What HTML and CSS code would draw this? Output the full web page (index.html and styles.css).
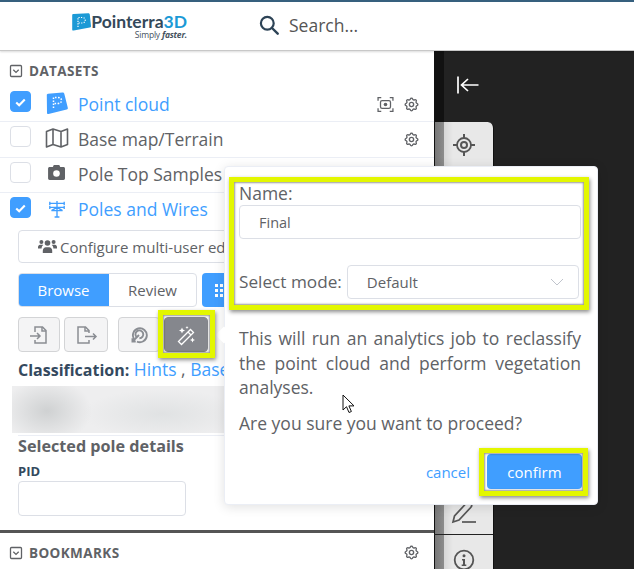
FILE: index.html
```html
<!DOCTYPE html>
<html lang="en">
<head>
<meta charset="utf-8">
<title>Pointerra3D</title>
<link rel="stylesheet" href="styles.css">
</head>
<body>
<svg class="defs" width="0" height="0" aria-hidden="true">
  <symbol id="gear" viewBox="0 0 24 24"><path fill="none" stroke="currentColor" stroke-width="1.9" d="M10.325 4.317c.426-1.756 2.924-1.756 3.35 0a1.724 1.724 0 002.573 1.066c1.543-.94 3.31.826 2.37 2.37a1.724 1.724 0 001.065 2.572c1.756.426 1.756 2.924 0 3.35a1.724 1.724 0 00-1.066 2.573c.94 1.543-.826 3.31-2.37 2.37a1.724 1.724 0 00-2.572 1.065c-.426 1.756-2.924 1.756-3.35 0a1.724 1.724 0 00-2.573-1.066c-1.543.94-3.31-.826-2.37-2.37a1.724 1.724 0 00-1.065-2.572c-1.756-.426-1.756-2.924 0-3.35a1.724 1.724 0 001.066-2.573c-.94-1.543.826-3.31 2.37-2.37.996.608 2.296.07 2.572-1.065z"/><circle cx="12" cy="12" r="3" fill="none" stroke="currentColor" stroke-width="1.9"/></symbol>
  <symbol id="collapse" viewBox="0 0 14 14"><rect x="1.500" y="1.500" width="11" height="11" rx="1" fill="none" stroke="currentColor" stroke-width="1.300"/><path d="M4.300 5.700 7 8.400l2.700-2.700" fill="none" stroke="currentColor" stroke-width="1.300"/></symbol>
  <symbol id="check" viewBox="0 0 20 20"><path d="M5.500 10.500 8.600 13.400 14.500 7.300" fill="none" stroke="#fff" stroke-width="2.200"/></symbol>
</svg>

<header class="topbar">
  <div class="logo">
    <svg class="logo-mark" width="19" height="18" viewBox="0 0 19 18"><path d="M1.500 1 16 .2c1 0 1.600.5 1.800 1.300L19 13c.1.9-.4 1.500-1.200 1.600L1.700 17.600c-.9.1-1.500-.4-1.500-1.200L.2 2.300C.2 1.500.7 1 1.500 1z" fill="#1c9ad6"/><path d="M6 14V4.500h4.200c2 0 3 1.200 3 2.700S12.200 10 10.200 10H6.200" fill="none" stroke="#fff" stroke-width="1.200" stroke-dasharray="1.200 1.300"/></svg>
    <div class="logo-text">
      <div class="logo-name">Pointerra<span class="logo-3d">3D</span></div>
      <div class="logo-tag">Simply <b><i>faster.</i></b></div>
    </div>
  </div>
  <div class="search">
    <svg width="20" height="20" viewBox="0 0 20 20"><circle cx="8.300" cy="8.300" r="6.400" fill="none" stroke="#2d4356" stroke-width="2.200"/><path d="m13 13 5.700 5.700" stroke="#2d4356" stroke-width="2.400" stroke-linecap="round"/></svg>
    <span>Search...</span>
  </div>
</header>

<main class="workspace">
  <section class="panel">
    <div class="panel-scroll">
      <h2 class="section-title datasets"><svg class="ico14"><use href="#collapse"/></svg>DATASETS</h2>

      <div class="row row-first">
        <span class="cb on"><svg width="20" height="20"><use href="#check"/></svg></span>
        <svg class="row-ico" width="24" height="24" viewBox="0 0 24 24"><path d="M3 2.800 17.500 1.500c1 0 1.500.4 1.800 1.200l3.500 14c.2 1-.2 1.600-1.100 1.800L3.500 23c-1 .2-1.500-.3-1.500-1.200L1.800 4c0-.7.500-1.100 1.200-1.200z" fill="#409eff"/><path d="M8.500 17V6.500h4.500c2.300 0 3.500 1.300 3.500 3s-1.300 3-3.500 3H8.800" fill="none" stroke="#fff" stroke-width="1.500" stroke-dasharray="1.500 1.500"/></svg>
        <span class="row-label blue">Point cloud</span>
        <span class="row-actions">
          <svg class="ico16" viewBox="0 0 16 16"><path d="M1 4.500V1.500h3M12 1.500h3v3M15 11.500v3h-3M4 14.500H1v-3" fill="none" stroke="currentColor" stroke-width="1.200"/><rect x="3.300" y="4.300" width="9.400" height="7.400" rx="1.500" fill="none" stroke="currentColor" stroke-width="1.200"/><circle cx="8" cy="8" r="1.700" fill="currentColor"/></svg>
          <svg class="ico16"><use href="#gear"/></svg>
        </span>
      </div>

      <div class="row row-second">
        <span class="cb"></span>
        <svg class="row-ico" width="24" height="24" viewBox="0 0 24 24"><path d="M1.500 5.500 8 3l8 2.500L22.500 3v15.500L16 21l-8-2.500L1.500 21zM8 3v15.500M16 5.500V21" fill="none" stroke="#606266" stroke-width="1.600" stroke-linejoin="round"/></svg>
        <span class="row-label">Base map/Terrain</span>
        <span class="row-actions"><svg class="ico16"><use href="#gear"/></svg></span>
      </div>

      <div class="row">
        <span class="cb"></span>
        <svg class="row-ico" width="24" height="24" viewBox="0 0 24 24"><path d="M4.500 6H8l1-2.200h6L16 6h3.500c1 0 1.700.7 1.700 1.700v10.600c0 1-.7 1.700-1.700 1.700h-15c-1 0-1.700-.7-1.700-1.700V7.700C2.800 6.700 3.500 6 4.500 6z" transform="translate(.5 -.5) scale(.92)" fill="#606266"/><circle cx="11.500" cy="11.500" r="3.300" fill="#fff"/></svg>
        <span class="row-label">Pole Top Samples</span>
      </div>

      <div class="row row-last">
        <span class="cb on"><svg width="20" height="20"><use href="#check"/></svg></span>
        <svg class="row-ico" width="24" height="24" viewBox="-3 -3 30 30"><path d="M12 2v20M3 5h18M3 10h18M5 14h14M3 3v4M21 3v4M3 8v4M21 8v4M12 10 5 14M12 10l7 4M9 22h6" fill="none" stroke="#409eff" stroke-width="1.700"/></svg>
        <span class="row-label blue">Poles and Wires</span>
      </div>

      <div class="config-btn">
        <svg width="19" height="15" viewBox="0 0 19 15"><g fill="#606266"><circle cx="9.500" cy="4" r="2.800"/><path d="M4.800 14v-2.300c0-2 1.500-3.400 3-3.400h3.400c1.500 0 3 1.400 3 3.400V14z"/><circle cx="3.400" cy="3" r="2"/><circle cx="15.600" cy="3" r="2"/><path d="M0 9.500V8c0-1.300 1-2.300 2-2.300h2.300c.4 0 .8.100 1 .3-.9.700-1.600 1.700-1.700 3.500zM19 9.500V8c0-1.300-1-2.300-2-2.300h-2.300c-.4 0-.8.100-1 .3.900.7 1.600 1.700 1.700 3.500z"/></g></svg>
        <span>Configure multi-user editing</span>
      </div>

      <div class="mode-row">
        <div class="seg">
          <span class="seg-item active">Browse</span>
          <span class="seg-item">Review</span>
        </div>
        <span class="grid-btn">
          <svg width="14" height="14" viewBox="0 0 14 14" fill="#fff"><rect x="1" y="1" width="3" height="3"/><rect x="6" y="1" width="3" height="3"/><rect x="1" y="6" width="3" height="3"/><rect x="6" y="6" width="3" height="3"/><rect x="1" y="11" width="3" height="3"/><rect x="6" y="11" width="3" height="3"/></svg>
        </span>
      </div>

      <div class="tool-row">
        <span class="tool w42"><svg width="22" height="22" viewBox="0 0 22 22" fill="none" stroke="#8a8d93" stroke-width="1.500"><path d="M7 8V3h7.500L18 6.500V19H7v-3"/><path d="M14 3v4h4"/><path d="M2 12h10M9 9l3 3-3 3"/></svg></span>
        <span class="tool w44"><svg width="24" height="22" viewBox="0 0 24 22" fill="none" stroke="#8a8d93" stroke-width="1.500"><path d="M15 9V6.500L11.500 3H4v16h11v-3"/><path d="M11 3v4h4"/><path d="M11 12.500h11M19 9.500l3 3-3 3"/></svg></span>
        <span class="tool w42 tool-gap"><svg width="18" height="18" viewBox="0 0 22 22" fill="none" stroke="#8a8d93" stroke-width="2.300"><path d="M5 16a8.500 8.500 0 1 1 3.500 3"/><path d="M8.500 14a4.800 4.800 0 1 1 3 1"/><path d="M11 11 3 19M3 15v4h4"/></svg></span>
        <span class="tool wand"><svg width="22" height="22" viewBox="0 0 22 22"><path d="M3.500 17.500 15.500 5.500l3 3-12 12zM13 8l3 3" fill="none" stroke="#fff" stroke-width="1.300"/><path d="M7 3.500l.9 2.100 2.100.9-2.100.9L7 9.500l-.9-2.100-2.100-.9 2.100-.9zM17.500 13.500l.8 1.700 1.700.8-1.700.8-.8 1.700-.8-1.700-1.700-.8 1.700-.8zM12 2l.5 1 1 .5-1 .5-.5 1-.5-1-1-.5 1-.5z" fill="#fff"/></svg></span>
      </div>

      <div class="classification"><b>Classification:</b> <a>Hints</a> , <a>Base</a></div>
      <div class="blurred"></div>
      <div class="rule"></div>
      <h3 class="details-title">Selected pole details</h3>
      <label class="pid">PID</label>
      <div class="pid-input"></div>
    </div>

    <div class="bookmarks">
      <h2 class="section-title"><svg class="ico14"><use href="#collapse"/></svg>BOOKMARKS</h2>
      <svg class="ico16"><use href="#gear"/></svg>
    </div>
  </section>

  <aside class="side">
    <div class="side-top">
      <svg width="24" height="20" viewBox="0 0 24 20" fill="none" stroke="#fff" stroke-width="1.700"><path d="M2 1.500v17"/><path d="M22.500 10H6.500M12 4l-6.500 6 6.500 6"/></svg>
    </div>
    <div class="rail">
      <div class="rail-cell target">
        <svg width="22" height="22" viewBox="0 0 22 22" fill="none" stroke="#555"><circle cx="11" cy="11" r="7" stroke-width="1.800"/><circle cx="11" cy="11" r="3" stroke-width="2"/><path d="M11 0v4M11 18v4M0 11h4M18 11h4" stroke-width="2"/></svg>
      </div>
      <div class="rail-spacer"></div>
      <div class="rail-cell pen">
        <svg width="26" height="24" viewBox="0 0 26 24" fill="none" stroke="#555" stroke-width="1.700"><path d="M2 22l1.500-6L15 3.500c1.500-1.500 3.500-1.500 4.700-.3s1.200 3 0 4.300L8 20z"/><path d="M11 22h14"/></svg>
      </div>
      <div class="rail-cell info">
        <svg width="22" height="22" viewBox="0 0 22 22"><circle cx="11" cy="11" r="9.300" fill="none" stroke="#555" stroke-width="1.800"/><circle cx="11" cy="6.800" r="1.500" fill="#555"/><path d="M9 10h3v5.500h1.300V17H8.700v-1.500H10V11.500H9z" fill="#555"/></svg>
      </div>
    </div>
  </aside>
</main>

<div class="popover">
  <span class="pop-arrow"></span>
  <div class="field-label">Name:</div>
  <div class="text-input">Final</div>
  <div class="mode-field">
    <span class="field-label mode-label">Select mode:</span>
    <div class="select"><span>Default</span>
      <svg width="14" height="8" viewBox="0 0 14 8" fill="none" stroke="#c0c4cc" stroke-width="1"><path d="M1 1l6 6 6-6"/></svg>
    </div>
  </div>
  <p class="pop-text">This will run an analytics job to reclassify the point cloud and perform vegetation analyses.</p>
  <p class="pop-text pop-q">Are you sure you want to proceed?</p>
  <div class="pop-actions">
    <a class="cancel">cancel</a>
    <span class="confirm">confirm</span>
  </div>
</div>

<div class="hl hl-form"></div>
<div class="hl hl-confirm"></div>
<div class="hl hl-wand"></div>

<svg class="cursor" width="13" height="20" viewBox="0 0 13 20"><path d="M1 1v15l3.500-3.300 2.500 5.800 2.400-1-2.500-5.600H12z" fill="#fff" stroke="#111" stroke-width="1"/></svg>
</body>
</html>
```

FILE: styles.css
```css
* { box-sizing: border-box; }
html, body { margin: 0; height: 100%; }
body {
  position: relative;
  width: 634px;
  height: 569px;
  overflow: hidden;
  display: flex;
  flex-direction: column;
  font-family: "Open Sans", sans-serif;
  color: #606266;
  background: #222;
}
.defs { position: absolute; }

/* top bar */
.topbar {
  height: 51px;
  flex: none;
  display: flex;
  align-items: center;
  padding: 0 0 0 72px;
  background: #fff;
  border-top: 2px solid #36607e;
  border-bottom: 1px solid #c8c8c8;
  box-shadow: 0 1px 2px rgba(0,0,0,.15);
  z-index: 2;
}
.logo { display: flex; align-items: flex-start; gap: 2px; width: 187px; height: 27px; }
.logo-mark { flex: none; }
.logo-text { display: flex; flex-direction: column; align-items: flex-end; width: 94px; }
.logo-name { font-family: Lato, sans-serif; font-weight: 700; font-size: 17.500px; line-height: 17px; color: #34495a; white-space: nowrap; }
.logo-3d { color: #1c9ad6; }
.logo-tag { font-size: 8.500px; line-height: 10px; color: #45525e; letter-spacing: -.2px; }
.search { display: flex; align-items: center; gap: 10px; font-size: 17.500px; color: #555; margin-top: -2px; }

/* layout */
.workspace { flex: 1; display: flex; min-height: 0; }
.panel { width: 434px; flex: none; background: #fff; display: flex; flex-direction: column; }
.panel-scroll { height: 479px; flex: none; overflow: hidden; }
.section-title {
  margin: 0;
  display: flex;
  align-items: center;
  gap: 6px;
  padding-left: 9px;
  font-size: 13.500px;
  font-weight: 700;
  letter-spacing: .4px;
  color: #606266;
}
.datasets { height: 37px; padding-top: 3px; }
.ico14 { width: 14px; height: 14px; color: #606266; flex: none; }
.ico16 { width: 17px; height: 17px; color: #606266; flex: none; }

/* rows */
.row {
  height: 35px;
  display: flex;
  align-items: center;
  padding-left: 10px;
  border-bottom: 1px solid #ebeef5;
}
.row-first { height: 34px; }
.row-second { height: 36px; }
.row-last { border-bottom: 0; }
.cb {
  width: 21px; height: 21px; flex: none;
  border: 1px solid #dcdfe6;
  border-radius: 4px;
  background: #fff;
  margin: 0 14px 6px 0;
}
.cb.on { background: #409eff; border-color: #409eff; display: flex; align-items: center; justify-content: center; }
.row-ico { flex: none; margin: 0 9px 3px 0; }
.row-label { font-size: 17.500px; white-space: nowrap; margin-bottom: 2px; }
.row-last .row-label { margin-bottom: 4px; }
.blue { color: #409eff; }
.row-actions { margin-left: auto; margin-right: 14px; display: flex; gap: 9px; align-items: center; }

/* buttons */
.config-btn {
  margin: 2px 0 0 18px;
  width: 420px;
  height: 33px;
  display: flex;
  align-items: center;
  gap: 3px;
  padding-left: 19px;
  border: 1px solid #dcdfe6;
  border-radius: 4px;
  font-size: 15px;
  white-space: nowrap;
}
.mode-row { display: flex; margin: 10px 0 0 18px; gap: 5px; }
.seg { display: flex; width: 179px; height: 34px; border: 1px solid #dcdfe6; border-radius: 4px; overflow: hidden; font-size: 15px; }
.seg-item { flex: 1; display: flex; align-items: center; justify-content: center; }
.seg-item.active { flex: none; width: 91px; margin: -1px 0 -1px -1px; background: #409eff; color: #fff; }
.grid-btn { width: 100px; height: 34px; background: #409eff; border-radius: 4px; display: flex; align-items: center; padding-left: 12px; }
.tool-row { display: flex; margin: 10px 0 0 18px; gap: 4px; }
.tool {
  height: 35px;
  display: flex;
  align-items: center;
  justify-content: center;
  background: #f4f4f5;
  border: 1px solid #d3d4d6;
  border-radius: 4px;
}
.w42 { width: 42px; }
.w44 { width: 44px; }
.tool-gap { margin-left: 6px; }
.tool.wand { width: 44px; background: #85878d; border-color: #85878d; }

.classification { margin: 5px 0 0 18px; font-size: 17.500px; line-height: 24px; white-space: nowrap; }
.classification b { color: #34495e; font-size: 16px; }
.classification a { color: #409eff; }
.blurred {
  margin: 4px 0 0 12px;
  height: 47px;
  width: 300px;
  background:
    radial-gradient(ellipse 45px 32px at 35px 25px, #cfd1d2, transparent),
    radial-gradient(ellipse 80px 25px at 150px 28px, #e0e2e3, transparent),
    #eeeeef;
}
.rule { height: 1px; margin: 2px 0 0 18px; background: #ebeef5; }
.details-title { margin: -1px 0 0 18px; font-size: 16.200px; line-height: 22px; font-weight: 700; color: #606266; }
.pid { display: block; margin: 4px 0 0 18px; font-size: 13px; line-height: 20px; font-weight: 700; color: #34495e; }
.pid-input { margin: 0 0 0 18px; width: 168px; height: 35px; border: 1px solid #dcdfe6; border-radius: 4px; }
.bookmarks {
  flex: 1;
  border-top: 3px solid #555;
  display: flex;
  align-items: center;
  padding: 3px 14px 0 0;
  justify-content: space-between;
}

/* right side */
.side { flex: 1; display: flex; flex-direction: column; min-width: 0; }
.side-top {
  height: 71px;
  flex: none;
  border-left: 10px solid #111;
  padding: 24px 0 0 12px;
  background: #222;
}
.rail {
  flex: 1;
  width: 60px;
  display: flex;
  flex-direction: column;
  background: linear-gradient(90deg, #111 0 1px, #777 1px, #8c8c8c 10px, #d6d6d6 10px, #e8e8e8 19px);
  border-top-right-radius: 6px;
  border-right: 1px solid #111;
}
.rail-cell { display: flex; align-items: center; justify-content: center; flex: none; }
.target { height: 46px; }
.rail-spacer { flex: 1; }
.pen { height: 44px; padding-bottom: 2px; border-bottom: 1px solid #222; }
.info { height: 34px; align-items: flex-start; padding-top: 14px; }

/* popover */
.popover {
  position: absolute;
  left: 224px;
  top: 166px;
  width: 374px;
  height: 339px;
  padding: 14px 16px 0 14px;
  background: #fff;
  border: 1px solid #ebeef5;
  border-radius: 4px;
  box-shadow: 0 2px 12px rgba(0,0,0,.12);
  z-index: 5;
}
.pop-arrow {
  position: absolute;
  left: -7px;
  top: 162px;
  width: 12px;
  height: 12px;
  background: #fff;
  transform: rotate(45deg);
}
.field-label { font-size: 17.500px; line-height: 24px; white-space: nowrap; }
.field-label.mode-label { font-size: 17.200px; }
.text-input {
  height: 34px;
  padding-left: 19px;
  display: flex;
  align-items: center;
  border: 1px solid #dcdfe6;
  border-radius: 4px;
  font-size: 14.500px;
}
.mode-field { display: flex; align-items: center; margin-top: 26px; gap: 5px; }
.select {
  flex: none;
  width: 232px;
  height: 34px;
  display: flex;
  align-items: center;
  justify-content: space-between;
  padding: 0 14px 0 19px;
  border: 1px solid #dcdfe6;
  border-radius: 4px;
  font-size: 15px;
}
.pop-text { margin: 27px 0 0; font-size: 17.500px; line-height: 24.500px; text-align: justify; }
.pop-q { margin-top: 11px; }
.pop-actions { position: absolute; right: 15px; bottom: 15px; display: flex; align-items: center; gap: 17px; }
.cancel { color: #409eff; font-size: 15px; }
.confirm {
  width: 95px;
  height: 35px;
  display: flex;
  align-items: center;
  justify-content: center;
  background: #409eff;
  color: #fff;
  border-radius: 4px;
  font-size: 15px;
}

/* annotation highlights */
.hl {
  position: absolute;
  z-index: 6;
  border: 5px solid #e3f700;
  box-shadow: 1px 2px 4px rgba(0,0,0,.45), inset 0 0 2px 1px rgba(0,0,0,.4);
  pointer-events: none;
}
.hl-form { left: 229px; top: 177px; width: 360px; height: 133px; }
.hl-confirm { left: 479px; top: 448px; width: 109px; height: 48px; }
.hl-wand { left: 158px; top: 310px; width: 57px; height: 48px; }
.cursor { position: absolute; left: 342px; top: 394px; z-index: 7; }
```
